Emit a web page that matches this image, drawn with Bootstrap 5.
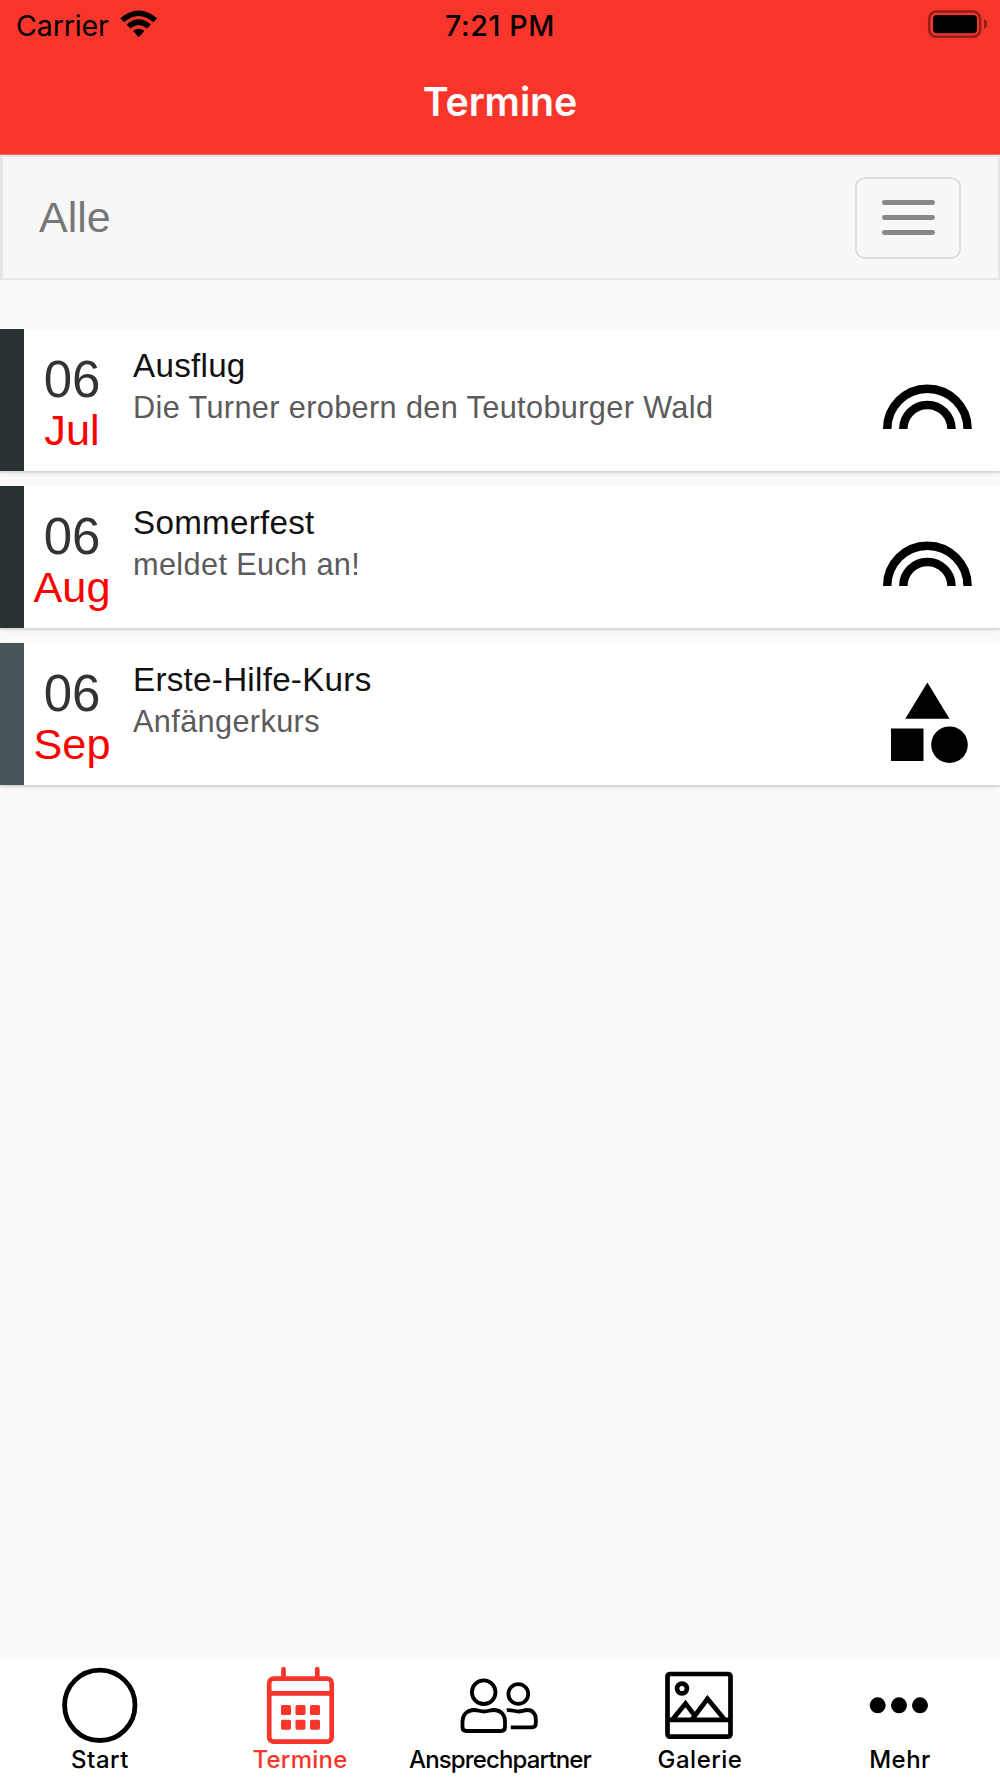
<!DOCTYPE html>
<html lang="de">
<head>
<meta charset="utf-8">
<meta name="viewport" content="width=device-width, initial-scale=1">
<title>Termine</title>
<link href="https://cdn.jsdelivr.net/npm/bootstrap@5.3.0/dist/css/bootstrap.min.css" rel="stylesheet">
<style>
body{background:#fafafa;font-family:"Liberation Sans",Arial,sans-serif;height:1778px;overflow:hidden}
svg{display:block;flex:none}
.app-head{background:#f8352b;height:155px;font-family:Inter,sans-serif;border-bottom:1px solid #f9665f}
.status{height:51px;line-height:51px;font-size:28.6px;color:#000}
.status>div{flex:1 1 0}
.carrier{padding-left:16px}
.cname{letter-spacing:-.15px}
.clock{font-weight:500;letter-spacing:.6px;padding-right:4px}
.batt{padding-right:12px}
.app-title{color:#fff;font-size:39.3px;font-weight:600;line-height:102px;height:103px;letter-spacing:-.1px;margin:0}
.filterbar{height:125px;background:#f8f8f8;border:2px solid #e7e7e7;border-left-width:3px;padding:0 37px 0 36px}
.filterbar .navbar-brand{font-size:43px;line-height:60px;color:#777;padding:0 0 2px;margin:0}
.filterbar .navbar-toggler{width:106px;height:82px;border:2px solid #ddd;border-radius:10px;padding:0;gap:9.7px}
.bar-line{width:53px;height:5px;border-radius:2.4px;background:#888}
.events{padding-top:48.5px;gap:14.5px}
.event{height:142.5px;background:#fff;box-shadow:0 2px 2px rgba(0,0,0,.13),0 3px 6px rgba(0,0,0,.04)}
.stripe{width:24px;background:#293133;flex:none}
.stripe-slate{background:#48555a}
.when{width:96px;flex:none;padding-top:26px}
.dayno{font-size:51px;line-height:49px;color:#333}
.month{font-size:43.3px;line-height:52px;color:#f00}
.what{padding:19px 0 0 13px}
.what h2{font-size:33.2px;line-height:36px;color:#111;margin:0;font-weight:400;letter-spacing:.27px}
.what p{font-size:30.7px;line-height:48px;color:#5b5b5b;margin:0;letter-spacing:.36px}
.pict{margin-right:23px}
.tabs{height:118px;background:#fff;font-family:Inter,sans-serif}
.tabs .nav-link{color:#000;padding:0;font-size:24px;font-weight:500;line-height:32px;width:200px;white-space:nowrap}
.tabs .nav-link.active{color:#f8352b}
.tabs svg{height:84px;width:100px}
.tabs span{letter-spacing:.5px}
.tabs .active span{letter-spacing:.25px}
.tabs .tight{letter-spacing:-.85px}
</style>
</head>
<body class="d-flex flex-column">
<header class="app-head flex-shrink-0">
  <div class="status d-flex">
    <div class="carrier d-flex"><span class="cname">Carrier</span>
      <svg class="wifi ms-2" width="42" height="51" viewBox="117 0 42 51"><path d="M138.700 37.200L133 31.100Q138.700 26.600 144.400 31.100zM126.500 24.600Q138.700 14 150.900 24.600L147 28.600Q138.700 21.200 130.400 28.600zM120.300 18.200Q138.700 2.600 157.100 18.200L153.300 22.200Q138.700 9.700 124.100 22.200z"/></svg>
    </div>
    <div class="clock text-center">7:21 PM</div>
    <div class="batt d-flex justify-content-end">
      <svg width="62" height="51" viewBox="926 0 62 51"><rect x="929.200" y="11.600" width="51" height="25.200" rx="7" fill="none" stroke="#931f19" stroke-width="2.500"/><rect x="933" y="15" width="44" height="18.300" rx="4"/><path d="M984 19Q987.300 20.500 987.300 24T984 29z" fill="#931f19"/></svg>
    </div>
  </div>
  <h1 class="app-title text-center">Termine</h1>
</header>
<nav class="filterbar navbar flex-shrink-0">
  <a class="navbar-brand" href="#">Alle</a>
  <button class="navbar-toggler d-flex flex-column align-items-center justify-content-center" type="button" aria-label="Menü"><span class="bar-line"></span><span class="bar-line"></span><span class="bar-line"></span></button>
</nav>
<main class="events d-flex flex-column flex-grow-1">
  <article class="event d-flex">
    <div class="stripe"></div>
    <div class="when text-center"><div class="dayno">06</div><div class="month">Jul</div></div>
    <div class="what flex-grow-1"><h2>Ausflug</h2><p>Die Turner erobern den Teutoburger Wald</p></div>
    <svg class="pict" width="100" height="142" viewBox="0 0 100 142" fill="none" stroke="#000" stroke-width="8.500"><path d="M10.200 100A40.200 40.200 0 0 1 90.600 100M26.300 100A24.100 24.100 0 0 1 74.500 100"/></svg>
  </article>
  <article class="event d-flex">
    <div class="stripe"></div>
    <div class="when text-center"><div class="dayno">06</div><div class="month">Aug</div></div>
    <div class="what flex-grow-1"><h2>Sommerfest</h2><p>meldet Euch an!</p></div>
    <svg class="pict" width="100" height="142" viewBox="0 0 100 142" fill="none" stroke="#000" stroke-width="8.500"><path d="M10.200 100A40.200 40.200 0 0 1 90.600 100M26.300 100A24.100 24.100 0 0 1 74.500 100"/></svg>
  </article>
  <article class="event d-flex">
    <div class="stripe stripe-slate"></div>
    <div class="when text-center"><div class="dayno">06</div><div class="month">Sep</div></div>
    <div class="what flex-grow-1"><h2>Erste-Hilfe-Kurs</h2><p>Anfängerkurs</p></div>
    <svg class="pict" width="100" height="142" viewBox="0 0 100 142"><path d="M50.400 39.500L72.500 75.700H28.300zM14 85.500H46.500V118H14z"/><circle cx="72.500" cy="101.700" r="18.300"/></svg>
  </article>
</main>
<nav class="tabs nav flex-nowrap flex-shrink-0">
  <a class="nav-link d-flex flex-column align-items-center" href="#"><svg viewBox="50 1660 100 84"><circle cx="99.800" cy="1705.300" r="35.200" fill="none" stroke="#000" stroke-width="4.800"/></svg><span>Start</span></a>
  <a class="nav-link active d-flex flex-column align-items-center" href="#"><svg viewBox="250 1660 100 84"><g fill="none" stroke="currentColor" stroke-width="4.700"><rect x="269.200" y="1678.700" width="62.500" height="63" rx="4.500"/><path d="M269 1693.300H332"/><path d="M283.500 1677V1669.200M317.300 1677V1669.200" stroke-linecap="round"/></g><g fill="currentColor"><rect x="281" y="1705" width="10" height="10" rx="1.600"/><rect x="295.500" y="1705" width="10" height="10" rx="1.600"/><rect x="310" y="1705" width="10" height="10" rx="1.600"/><rect x="281" y="1719.700" width="10" height="10" rx="1.600"/><rect x="295.500" y="1719.700" width="10" height="10" rx="1.600"/><rect x="310" y="1719.700" width="10" height="10" rx="1.600"/></g></svg><span>Termine</span></a>
  <a class="nav-link d-flex flex-column align-items-center" href="#"><svg viewBox="450 1660 100 84" fill="none" stroke="#000" stroke-width="3.800"><circle cx="483.700" cy="1692.200" r="11.800"/><circle cx="518.300" cy="1694" r="9.900"/><path d="M474 1710C478 1710 480 1711.500 484 1711.500S490 1710 494 1710C501 1710 505 1715 505 1721V1727Q505 1731 501 1731H466.500Q462.500 1731 462.500 1727V1721C462.500 1715 467 1710 474 1710z"/><path d="M506.800 1710.400C511 1709.200 514 1711.500 518.500 1711.500S524 1710 527.500 1710C532.500 1710 535.800 1714 535.800 1719V1723.500Q535.800 1727.300 532 1727.300H510.800"/></svg><span class="tight">Ansprechpartner</span></a>
  <a class="nav-link d-flex flex-column align-items-center" href="#"><svg viewBox="650 1660 100 84" fill="none" stroke="#000" stroke-width="4.700"><rect x="667.500" y="1674" width="63" height="62.700" rx="2.500"/><path d="M667 1719.800H731M672.500 1719.500L685.500 1703.500 695.500 1716.500M692 1719.500L707.500 1698.800 724.500 1719.500"/><circle cx="682" cy="1688.500" r="4.900"/></svg><span>Galerie</span></a>
  <a class="nav-link d-flex flex-column align-items-center" href="#"><svg viewBox="850 1660 100 84"><circle cx="877.700" cy="1705.300" r="8"/><circle cx="899" cy="1705.300" r="8"/><circle cx="920" cy="1705.300" r="8"/></svg><span>Mehr</span></a>
</nav>
<script src="https://cdn.jsdelivr.net/npm/bootstrap@5.3.0/dist/js/bootstrap.bundle.min.js"></script>
</body>
</html>
